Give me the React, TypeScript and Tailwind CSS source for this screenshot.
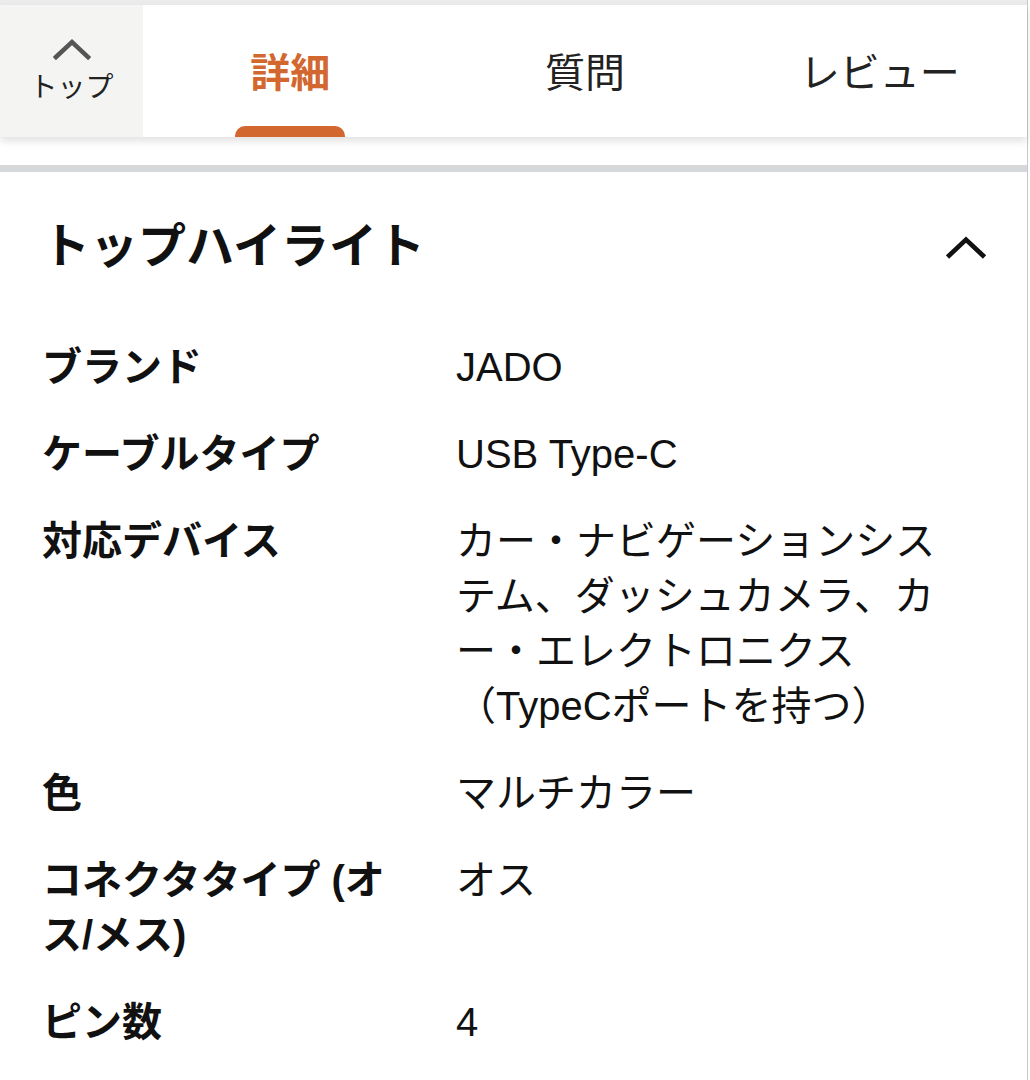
import React from "react"

const rows: { label: string; value: string }[] = [
  { label: "ブランド", value: "JADO" },
  { label: "ケーブルタイプ", value: "USB Type-C" },
  { label: "対応デバイス", value: "カー・ナビゲーションシステム、ダッシュカメラ、カー・エレクトロニクス（TypeCポートを持つ）" },
  { label: "色", value: "マルチカラー" },
  { label: "コネクタタイプ (オス/メス)", value: "オス" },
  { label: "ピン数", value: "4" },
]

function Chevron({ className, stroke }: { className: string; stroke: string }) {
  return (
    <svg viewBox="0 0 40 24" className={className} fill="none" stroke={stroke} strokeWidth="4.5" strokeLinecap="square">
      <path d="M4 20 L20 5 L36 20" />
    </svg>
  )
}

export default function App() {
  return (
    <div className="w-[1030px] min-h-[1080px] bg-white text-[#111] font-['Liberation_Sans','Noto_Sans_CJK_JP',sans-serif]">
      <div className="w-[1028px] min-h-[1080px] border-r border-[#c8c8c8]">
        <div className="h-[5px] bg-[#ececec]" />
        <div className="relative z-10 flex h-[132px] bg-white shadow-[0_4px_8px_rgba(0,0,0,0.12)]">
          <div className="flex w-[143px] flex-col items-center bg-[#f4f5f3] pt-[31px]">
            <Chevron className="h-[26px] w-[40px]" stroke="#555" />
            <span className="mt-[9px] text-[28px] leading-[34px] text-[#222]">トップ</span>
          </div>
          {["詳細", "質問", "レビュー"].map((t, i) => (
            <div key={t} className="relative flex flex-1 justify-center pt-[40px]">
              <span className={`text-[40px] leading-[56px] ${i === 0 ? "font-bold text-[#d2672f]" : "text-[#222]"}`}>{t}</span>
              {i === 0 && <div className="absolute bottom-0 left-[92px] h-[11px] w-[110px] rounded-t-[10px] bg-[#d2672f]" />}
            </div>
          ))}
        </div>
        <div className="h-[28px] bg-white" />
        <div className="h-[7px] bg-[#d6d8d9]" />
        <div className="px-[42px] pt-[45px]">
          <div className="flex items-center justify-between">
            <h2 className="text-[48px] font-bold leading-[60px]">トップハイライト</h2>
            <Chevron className="mr-[-2px] h-[26px] w-[42px]" stroke="#111" />
          </div>
          <div className="mt-[63px] flex flex-col gap-[32px]">
            {rows.map(r => (
              <div key={r.label} className="flex text-[40px] leading-[55px]">
                <div className="mr-[39px] w-[375px] shrink-0 font-bold">{r.label}</div>
                <div className="w-[500px]">{r.value}</div>
              </div>
            ))}
          </div>
        </div>
      </div>
    </div>
  )
}
